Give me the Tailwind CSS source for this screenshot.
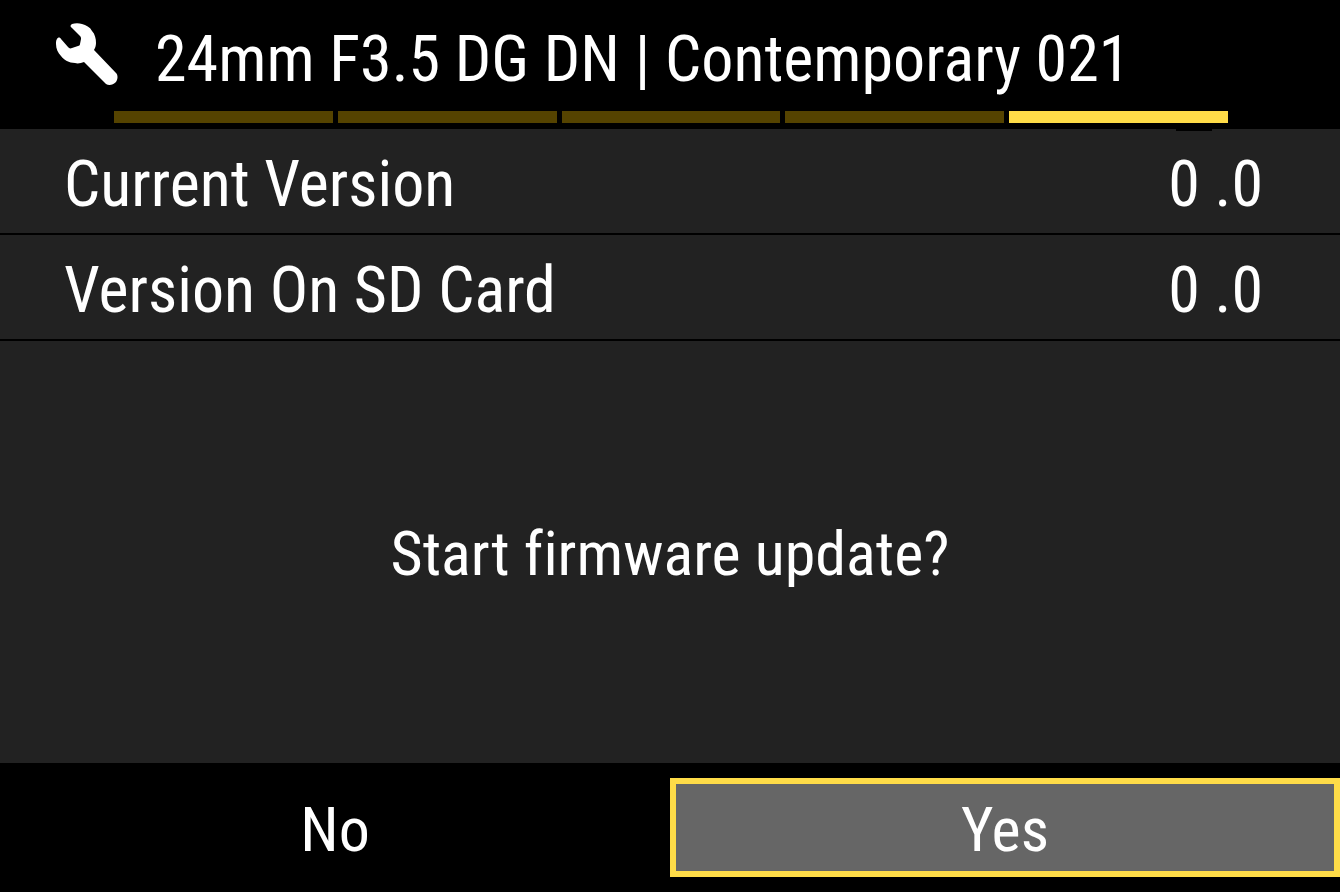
<!DOCTYPE html>
<html lang="en">
<head>
  <meta charset="UTF-8">
  <meta name="viewport" content="width=device-width, initial-scale=1.0">
  <title>Lens Firmware Update</title>
  <script src="https://cdn.jsdelivr.net/npm/@tailwindcss/browser@4"></script>
</head>
<body class="min-h-screen flex flex-col bg-black text-white font-['Roboto_Condensed','Liberation_Sans',sans-serif] text-[64px] leading-[76px] [font-variant-ligatures:none]">
  <header class="pt-[22px]">
    <div class="flex items-center gap-9 pl-14">
      <svg class="w-[63px] h-[63px] shrink-0 mb-3" viewBox="0 0 63 63" fill="currentColor" aria-hidden="true">
        <path d="M16 1C19 0 23 0 26 1C30 2 34 4 36 8C39 11 40 16 40 20C40 23 39 25 38 27L60 50C62 52 62 56 60 59C57 62 53 63 50 61L28 39C25 40 22 41 19 40C13 40 8 37 5 33C2 30 0 26 0 21C0 19 0 17 1 16C2 14 4 14 5 16L12 24C13 25 14 26 16 25L22 23C23 23 24 22 24 21L25 16C25 15 25 14 24 13L16 5C14 4 14 2 16 1Z"/>
      </svg>
      <h1 class="whitespace-nowrap">24mm F3.5 DG DN | Contemporary 021</h1>
    </div>
    <!-- Page indicator, last page active -->
    <div class="grid grid-cols-5 gap-[5px] pl-[114px] pr-28 pt-[13px] pb-[6px]">
      <span class="h-3 bg-[#554300]"></span>
      <span class="h-3 bg-[#554300]"></span>
      <span class="h-3 bg-[#554300]"></span>
      <span class="h-3 bg-[#554300]"></span>
      <span class="h-3 bg-[#ffdc48]"></span>
    </div>
  </header>

  <main class="flex-1 flex flex-col bg-[#222222]">
    <dl>
      <div class="relative flex items-center justify-between h-[106px] pt-2 pl-16 pr-[77px] border-b-2 border-black">
        <dt>Current Version</dt>
        <dd>0 .0</dd>
        <span class="absolute top-0 right-32 w-9 h-[2px] bg-black"></span>
      </div>
      <div class="flex items-center justify-between h-[106px] pt-2 pl-16 pr-[77px] border-b-2 border-black">
        <dt>Version On SD Card</dt>
        <dd>0 .0</dd>
      </div>
    </dl>
    <p class="flex-1 flex items-center justify-center pt-1 text-[62px]">Start firmware update?</p>
  </main>

  <footer class="grid grid-cols-2 pt-[15px] pb-[15px] text-[62px]">
    <button type="button" class="h-[99px] pt-1 border-6 border-transparent">No</button>
    <button type="button" class="h-[99px] pt-1 border-6 border-[#ffdc48] bg-[#666666]">Yes</button>
  </footer>
</body>
</html>
